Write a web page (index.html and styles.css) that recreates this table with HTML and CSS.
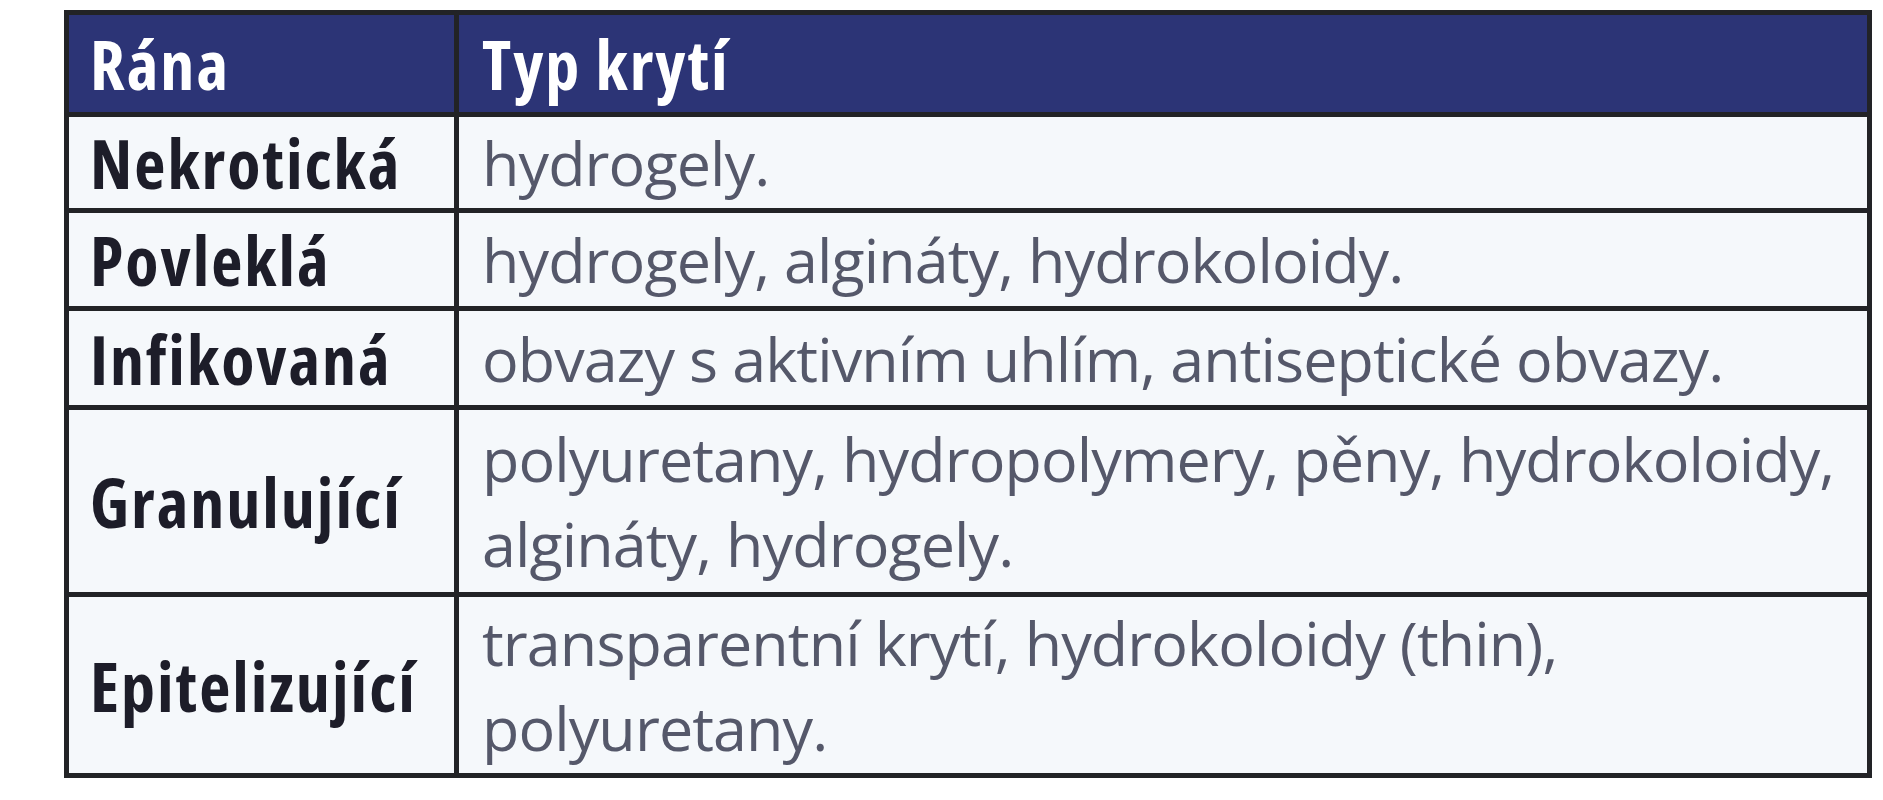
FILE: index.html
```html
<!DOCTYPE html>
<html lang="cs">
<head>
<meta charset="utf-8">
<title>Typ krytí rány</title>
<link rel="stylesheet" href="styles.css">
</head>
<body>
<div class="page">
  <table class="dressings">
    <thead>
      <tr class="row-head">
        <th class="col-wound">Rána</th>
        <th class="col-type">Typ krytí</th>
      </tr>
    </thead>
    <tbody>
      <tr class="row-1">
        <td class="col-wound">Nekrotická</td>
        <td class="col-type">hydrogely.</td>
      </tr>
      <tr class="row-2">
        <td class="col-wound">Povleklá</td>
        <td class="col-type">hydrogely, algináty, hydrokoloidy.</td>
      </tr>
      <tr class="row-3">
        <td class="col-wound">Infikovaná</td>
        <td class="col-type">obvazy s aktivním uhlím, antiseptické obvazy.</td>
      </tr>
      <tr class="row-4">
        <td class="col-wound">Granulující</td>
        <td class="col-type">polyuretany, hydropolymery, pěny, hydrokoloidy,<br>algináty, hydrogely.</td>
      </tr>
      <tr class="row-5 last">
        <td class="col-wound">Epitelizující</td>
        <td class="col-type">transparentní krytí, hydrokoloidy (thin),<br>polyuretany.</td>
      </tr>
    </tbody>
  </table>
</div>
</body>
</html>
```

FILE: styles.css
```css
html, body {
  margin: 0;
  padding: 0;
  background: #ffffff;
}

.page {
  padding: 10px 0 0 64px;
}

.dressings {
  width: 1808px;
  border: 5px solid #222326;
  border-collapse: separate;
  border-spacing: 0;
  font-family: "Open Sans", "Noto Sans", "Liberation Sans", sans-serif;
  font-size: 66px;
  line-height: 85px;
  table-layout: fixed;
}

.dressings th,
.dressings td {
  padding: 0 18px 0 21px;
  vertical-align: middle;
  text-align: left;
  border-bottom: 5px solid #222326;
  background: #f5f8fb;
  white-space: nowrap;
}

.dressings .last td {
  border-bottom: none;
}

.dressings .col-wound {
  width: 390px;
  box-sizing: border-box;
  border-right: 5px solid #222326;
  font-size: 68px;
  font-weight: 700;
  font-stretch: 80%;
  letter-spacing: 2px;
  color: #1d1d29;
}

.dressings .col-type {
  padding-left: 23px;
  font-size: 61px;
  font-weight: 400;
  font-stretch: 90%;
  letter-spacing: -0.9px;
  color: #55586a;
}

.dressings thead .col-wound,
.dressings thead .col-type {
  background: #2c3476;
  color: #ffffff;
  font-size: 68px;
  font-weight: 700;
  font-stretch: 80%;
  letter-spacing: 2px;
}

.row-head th { height: 97px; }
.row-1 td { height: 91px; }
.row-2 td { height: 93px; }
.row-3 td { height: 94px; }
.row-4 td { height: 182px; }
.row-5 td { height: 176px; }
```
